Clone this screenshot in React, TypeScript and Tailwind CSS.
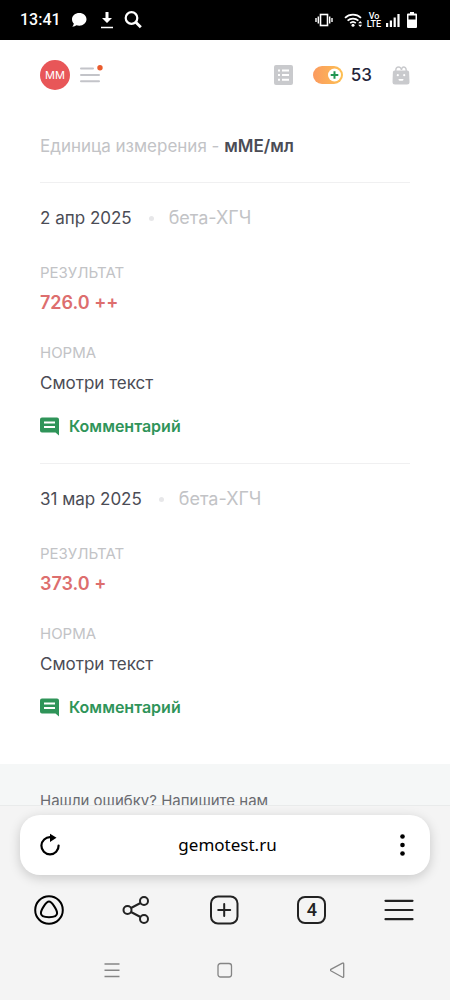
import React from "react";

const results = [
  { date: "2 апр 2025", name: "бета-ХГЧ", value: "726.0 ++", norm: "Смотри текст" },
  { date: "31 мар 2025", name: "бета-ХГЧ", value: "373.0 +", norm: "Смотри текст" },
];

function StatusBar() {
  return (
    <div className="flex h-10 shrink-0 items-center bg-black pl-5 pr-8 text-white">
      <span className="font-['Roboto',sans-serif] text-base leading-5 font-medium">13:41</span>
      <svg className="ml-[10px] h-4 w-4" viewBox="0 0 16 16" fill="currentColor">
        <path d="M8.300 1C4.300 1 1 3.700 1 7.300c0 1.700.7 3.200 1.800 4.300-.1 1.100-.7 2.200-1.500 3.100 1.700 0 3.100-.6 4.100-1.400.9.300 1.900.4 2.900.4 4 0 7.200-2.800 7.200-6.400S12.300 1 8.300 1z" />
      </svg>
      <svg className="ml-3 h-5 w-4" viewBox="0 0 16 20">
        <path d="M6.500 2h3v6h3.500L8 13 3 8h3.500z" fill="currentColor" />
        <path d="M2 17.500h12" stroke="currentColor" strokeWidth="1.500" />
      </svg>
      <svg className="ml-2 h-5 w-5" viewBox="0 0 20 20" fill="none" stroke="currentColor">
        <circle cx="8.500" cy="8" r="5.800" strokeWidth="2.200" />
        <path d="M12.800 12.300l5 5" strokeWidth="2.800" />
      </svg>

      <div className="ml-auto flex items-center">
        <svg className="h-4 w-[18px]" viewBox="0 0 18 16" fill="none" stroke="currentColor">
          <rect x="5.500" y="2.500" width="7" height="11" strokeWidth="1.600" />
          <path d="M3.300 4.500v7M14.700 4.500v7" strokeWidth="1.400" />
          <path d="M1 6v4M17 6v4" strokeWidth="1.400" />
        </svg>
        <svg className="ml-[11px] h-4 w-[19px]" viewBox="0 0 19 16" fill="none" stroke="currentColor" strokeWidth="1.700">
          <path d="M1 5.800a11.500 11.500 0 0 1 16 0" />
          <path d="M3.600 8.700a7.800 7.800 0 0 1 10.800 0" />
          <path d="M6.200 11.200a4.200 4.200 0 0 1 5.600 0" />
          <circle cx="9" cy="13.300" r="1.500" fill="currentColor" stroke="none" />
          <path d="M14.200 11.200l2-2.200 2 2.200zM14.200 12.800l2 2.200 2-2.200z" fill="currentColor" stroke="none" />
        </svg>
        <span className="ml-[3px] flex w-4 flex-col items-center font-['Roboto',sans-serif] text-[9px] leading-2 font-medium">
          <span>Vo</span>
          <span>LTE</span>
        </span>
        <svg className="ml-[3px] h-4 w-4" viewBox="0 0 16 16" fill="currentColor">
          <rect x="1" y="11" width="2.200" height="4" />
          <rect x="4.800" y="8.500" width="2.200" height="6.500" />
          <rect x="8.600" y="5.500" width="2.200" height="9.500" />
          <rect x="12.400" y="2" width="2.200" height="13" />
        </svg>
        <svg className="ml-[5px] h-4 w-3" viewBox="0 0 12 16">
          <path d="M4 0h4v1.500h2q1 0 1 1V15q0 1-1 1H2q-1 0-1-1V2.500q0-1 1-1h2z" fill="currentColor" />
          <rect x="2.500" y="3.500" width="7" height="4" fill="#000" />
        </svg>
      </div>
    </div>
  );
}

function Header() {
  return (
    <header className="flex h-[70px] items-center px-10">
      <button className="h-[30px] w-[30px] rounded-full bg-[#e85658] text-[11px] leading-4 text-white">ММ</button>
      <button aria-label="Меню" className="ml-[10px]">
        <svg className="h-5 w-6" viewBox="0 0 24 20" fill="none">
          <path d="M1 3.500h12M1 10h18M1 16.200h18" stroke="#c3c4c9" strokeWidth="2" strokeLinecap="round" />
          <circle cx="20" cy="2.700" r="2.700" fill="#ea5b2d" />
        </svg>
      </button>

      <button aria-label="Заказы" className="ml-auto">
        <svg className="h-5 w-[19px]" viewBox="0 0 19 20">
          <rect width="19" height="20" rx="2" fill="#c9cacd" />
          <path d="M4 5.500h2M4 10h2M4 14.800h2M8 5.500h7M8 10h7M8 14.800h7" stroke="#fff" strokeWidth="2" />
        </svg>
      </button>
      <button className="ml-5 flex items-center gap-2 text-[17px] leading-6 font-medium text-[#23243a]">
        <svg className="h-[18px] w-[30px]" viewBox="0 0 30 18">
          <defs>
            <linearGradient id="bonus" x1="0" y1="0" x2="1" y2="0">
              <stop offset="0" stopColor="#fb9a5f" />
              <stop offset="1" stopColor="#fdc052" />
            </linearGradient>
          </defs>
          <rect width="30" height="18" rx="9" fill="url(#bonus)" />
          <circle cx="21.500" cy="9" r="6.500" fill="#fff" />
          <path d="M21.500 5.200v7.600M17.700 9h7.600" stroke="#219653" strokeWidth="2" />
        </svg>
        53
      </button>
      <button aria-label="Корзина" className="ml-5">
        <svg className="h-[19px] w-[18px]" viewBox="0 0 18 19">
          <path d="M3.800 5V4Q4 1 6.500 1 9 1 9.500 4 10 1 11.500 1q2.500 0 2.700 3v1" fill="none" stroke="#c9cacd" strokeWidth="1.400" />
          <path d="M2.500 4.500h13q1.500 0 1.600 1.500L17.500 16q0 2.500-2.500 2.500H3Q.5 18.500.5 16L.9 6Q1 4.500 2.500 4.500z" fill="#c9cacd" />
          <circle cx="5.800" cy="9.200" r="1.100" fill="#fff" />
          <circle cx="12.200" cy="9.200" r="1.100" fill="#fff" />
          <path d="M6.500 13h5q0 1.700-1 1.700h-3q-1 0-1-1.700z" fill="#fff" />
        </svg>
      </button>
    </header>
  );
}

function Result({ item }: { item: (typeof results)[number] }) {
  return (
    <article className="border-t border-[#f0f0f1] pt-[23px] pb-[25px]">
      <div className="flex items-center leading-6">
        <h2 className="text-[17px] text-[#4b4c55]">{item.date}</h2>
        <span className="mr-[15px] ml-[17px] h-[5px] w-[5px] rounded-full bg-[#e7e7e9]" />
        <span className="text-lg leading-6 text-[#c2c3c6]">{item.name}</span>
      </div>
      <dl>
        <dt className="mt-[33px] text-[15px] leading-5 text-[#c2c3c6]">РЕЗУЛЬТАТ</dt>
        <dd className="mt-2 text-lg leading-6 font-semibold text-[#dd6e6e]">{item.value}</dd>
        <dt className="mt-7 text-[15px] leading-5 text-[#c2c3c6]">НОРМА</dt>
        <dd className="mt-2 text-[17px] leading-6 text-[#4b4c55]">{item.norm}</dd>
      </dl>
      <button className="mt-[19px] flex items-center gap-[10px] text-base leading-6 font-semibold text-[#2f9459]">
        <svg className="h-[19px] w-[19px]" viewBox="0 0 19 19">
          <path d="M2 .5h15q2 0 2 2V18.500L15.500 15.500H2q-2 0-2-2v-11q0-2 2-2z" fill="currentColor" />
          <path d="M4 5.500h11M4 10h11" stroke="#fff" strokeWidth="1.800" />
        </svg>
        Комментарий
      </button>
    </article>
  );
}

function BrowserBar() {
  return (
    <div className="shrink-0 border-t border-[#e9ebeb] bg-[#f4f4f4]">
      <div className="mx-5 mt-[9px] flex h-[60px] items-center justify-between rounded-[20px] bg-white px-5 text-black shadow-[0_3px_12px_rgba(0,0,0,0.18)]">
        <button aria-label="Обновить">
          <svg className="h-6 w-5" viewBox="0 0 20 24" fill="none">
            <path d="M10.500 4.200A8.600 8.600 0 1 0 18.600 12.500" stroke="currentColor" strokeWidth="2.200" strokeLinecap="round" />
            <path d="M10 .8L16.500 4.800 10 9z" fill="currentColor" />
          </svg>
        </button>
        <button className="font-['Noto_Sans',sans-serif] text-[17px] leading-6">gemotest.ru</button>
        <button aria-label="Ещё" className="flex w-[15px] justify-center">
          <svg className="h-6 w-[5px]" viewBox="0 0 5 24" fill="currentColor">
            <circle cx="2.500" cy="3.500" r="2.300" />
            <circle cx="2.500" cy="12" r="2.300" />
            <circle cx="2.500" cy="20.500" r="2.300" />
          </svg>
        </button>
      </div>

      <nav className="mt-5 flex h-[30px] items-center justify-between pr-9 pl-[34px] text-[#222]">
        <button aria-label="Алиса">
          <svg className="h-[30px] w-[30px] text-black" viewBox="0 0 30 30" fill="none" stroke="currentColor" strokeWidth="2">
            <circle cx="15" cy="15" r="13.800" />
            <path d="M15 6.500C12.200 6.500 6.900 15 6.900 18.300 6.900 21.300 11 22.200 15 22.200S23.100 21.300 23.100 18.300C23.100 15 17.800 6.500 15 6.500z" />
          </svg>
        </button>
        <button aria-label="Поделиться">
          <svg className="h-[30px] w-[30px]" viewBox="0 0 30 30" fill="none" stroke="currentColor" strokeWidth="2">
            <circle cx="5.500" cy="15" r="4" />
            <circle cx="22" cy="6" r="4" />
            <circle cx="22" cy="24" r="4" />
            <path d="M9 13l9.500-5M9 17l9.500 5" />
          </svg>
        </button>
        <button aria-label="Новая вкладка">
          <svg className="h-[30px] w-[30px]" viewBox="0 0 30 30" fill="none" stroke="currentColor" strokeWidth="2">
            <rect x="1" y="1.500" width="26.500" height="27" rx="7" />
            <path d="M14.200 9v12M8.200 15h12" strokeLinecap="round" />
          </svg>
        </button>
        <button
          aria-label="Вкладки: 4"
          className="flex h-7 w-[29px] items-center justify-center rounded-lg border-2 border-[#222] font-['Roboto',sans-serif] text-lg leading-6 font-medium"
        >
          4
        </button>
        <button aria-label="Меню браузера">
          <svg className="h-[30px] w-[30px]" viewBox="0 0 30 30" fill="none" stroke="currentColor" strokeWidth="2.200" strokeLinecap="round">
            <path d="M1.500 5.800h27M1.500 15h27M1.500 24.200h27" />
          </svg>
        </button>
      </nav>

      {/* Android system buttons */}
      <div className="flex h-[75px] items-center justify-around px-14 pt-[15px] text-[#858585]">
        <button aria-label="Недавние">
          <svg className="h-4 w-4" viewBox="0 0 16 16" stroke="currentColor" strokeWidth="1.500">
            <path d="M.5 2h15M.5 8.200h15M.5 14.400h15" />
          </svg>
        </button>
        <button aria-label="Домой">
          <svg className="h-4 w-4" viewBox="0 0 16 16" fill="none" stroke="currentColor" strokeWidth="1.300">
            <rect x="1" y="1.500" width="13.500" height="13.500" rx="2.500" />
          </svg>
        </button>
        <button aria-label="Назад">
          <svg className="h-4 w-4" viewBox="0 0 16 16" fill="none" stroke="currentColor" strokeWidth="1.300" strokeLinejoin="round">
            <path d="M12.500 1.200L.8 7.300q-1 .7 0 1.400L12.500 15.200q1.200.5 1.200-.8V2q0-1.300-1.200-.8z" />
          </svg>
        </button>
      </div>
    </div>
  );
}

export default function App() {
  return (
    <div className="flex h-screen flex-col bg-white font-['Inter','Noto_Sans',sans-serif]">
      <StatusBar />
      <div className="min-h-0 flex-1 overflow-hidden">
        <Header />
        <main className="px-10 pb-5">
          <p className="py-6 text-[17px] leading-6 text-[#c2c3c6]">
            Единица измерения - <span className="font-semibold text-[#4b4c55]">мМЕ/мл</span>
          </p>
          {results.map((item) => (
            <Result key={item.date} item={item} />
          ))}
        </main>
        <footer className="bg-[#f5f7f7] px-10 pt-[27px] pb-10">
          <a href="#feedback" className="block text-[15px] leading-5 text-[#6a6b70]">
            Нашли ошибку? Напишите нам
          </a>
        </footer>
      </div>
      <BrowserBar />
    </div>
  );
}
